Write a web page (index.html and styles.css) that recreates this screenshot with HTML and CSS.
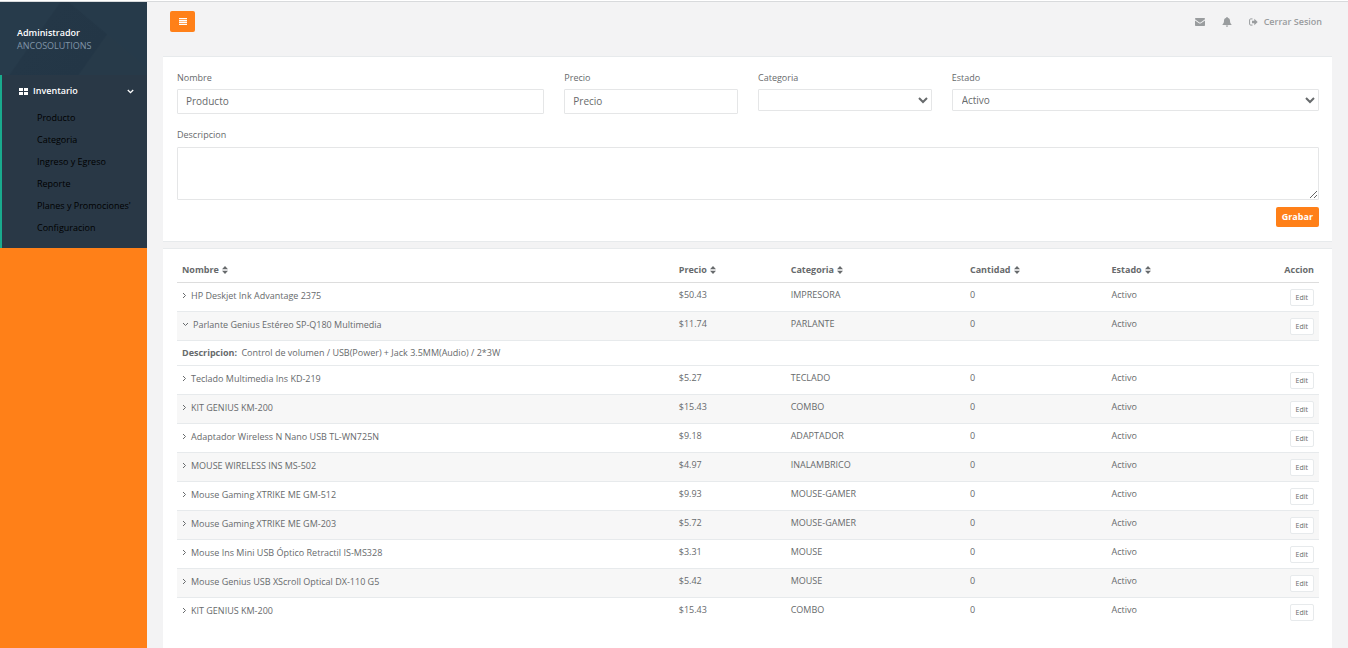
FILE: index.html
```html
<!DOCTYPE html>
<html lang="es">
<head>
  <meta charset="UTF-8" />
  <meta name="viewport" content="width=device-width, initial-scale=1" />
  <title>Inventario - Producto</title>
  <link rel="stylesheet" href="styles.css">
</head>
<body>
  <svg class="sprite" aria-hidden="true">
    <symbol id="sort" viewBox="0 0 6 8"><path d="M3 0L6 3.3H0zM0 4.7h6L3 8z"/></symbol>
    <symbol id="right" viewBox="0 0 5 7"><path d="M1 1L3.500 3.500 1 6" fill="none" stroke="currentColor"/></symbol>
    <symbol id="down" viewBox="0 0 7 5"><path d="M1 1L3.500 3.500 6 1" fill="none" stroke="currentColor"/></symbol>
    <symbol id="down-bold" viewBox="0 0 7 5"><path d="M.8 1L3.5 3.7 6.2 1" fill="none" stroke="currentColor" stroke-width="1.300"/></symbol>
  </svg>

  <div class="wrapper">
    <aside class="sidebar">
      <div class="nav-header">
        <strong>Administrador</strong>
        <span>ANCOSOLUTIONS</span>
      </div>
      <nav class="nav-menu">
        <a href="#" class="nav-title">
          <svg class="icon-grid" viewBox="0 0 9 7"><path d="M0 0h4v3H0zM5 0h4v3H5zM0 4h4v3H0zM5 4h4v3H5z"/></svg>
          <span>Inventario</span>
          <svg class="icon-down"><use href="#down-bold"/></svg>
        </a>
        <ul>
          <li><a href="#">Producto</a></li>
          <li><a href="#">Categoria</a></li>
          <li><a href="#">Ingreso y Egreso</a></li>
          <li><a href="#">Reporte</a></li>
          <li><a href="#">Planes y Promociones'</a></li>
          <li><a href="#">Configuracion</a></li>
        </ul>
      </nav>
    </aside>

    <div class="page">
      <header class="topbar">
        <button type="button" class="btn-menu" aria-label="Menu">
          <svg viewBox="0 0 8 7"><path d="M0 0h8v1.300H0zM0 1.900h8v1.300H0zM0 3.800h8v1.300H0zM0 5.700h8V7H0z"/></svg>
        </button>
        <div class="top-links">
          <a href="#" aria-label="Mensajes">
            <svg class="icon-mail" viewBox="0 0 10 8"><path d="M0 .8Q0 0 .8 0h8.4q.8 0 .8.8v.5L5.6 4.4q-.6.4-1.2 0L0 1.3zM0 2.5l4 2.8q1 .6 2 0l4-2.8v4.7q0 .8-.8.8H.8Q0 8 0 7.200z"/></svg>
          </a>
          <a href="#" aria-label="Alertas">
            <svg class="icon-bell" viewBox="0 0 10 10"><path d="M4.400 0h1.200v.8c1.700.3 2.400 1.500 2.400 3 0 2 .6 3 1.500 3.700v.5H.5v-.5C1.400 6.800 2 5.800 2 3.800c0-1.500.7-2.700 2.400-3zM3.800 8.500h2.400Q6.200 9.800 5 9.800T3.800 8.500z"/></svg>
          </a>
          <a href="#">
            <svg class="icon-out" viewBox="0 0 9 8"><path d="M3.500.9H1.700q-1.100 0-1.100 1.100v4q0 1.100 1.100 1.100h1.800" fill="none" stroke="currentColor"/><path d="M3 2.700h2.300V.8L8.700 4 5.300 7.200V5.300H3z"/></svg>
            <span>Cerrar Sesion</span>
          </a>
        </div>
      </header>

      <main>
        <form class="card form-producto">
          <div class="field col-4">
            <label for="nombre">Nombre</label>
            <input type="text" id="nombre" placeholder="Producto">
          </div>
          <div class="field col-2">
            <label for="precio">Precio</label>
            <input type="text" id="precio" placeholder="Precio">
          </div>
          <div class="field col-2">
            <label for="categoria">Categoria</label>
            <select id="categoria"><option></option></select>
          </div>
          <div class="field col-4">
            <label for="estado">Estado</label>
            <select id="estado"><option>Activo</option></select>
          </div>
          <div class="field col-12">
            <label for="descripcion">Descripcion</label>
            <textarea id="descripcion"></textarea>
          </div>
          <div class="actions col-12">
            <button type="button" class="btn-grabar">Grabar</button>
          </div>
        </form>

        <section class="card">
          <table class="tabla">
            <thead>
              <tr>
                <th class="c-nombre"><button type="button">Nombre <svg><use href="#sort"/></svg></button></th>
                <th class="c-precio"><button type="button">Precio <svg><use href="#sort"/></svg></button></th>
                <th class="c-categoria"><button type="button">Categoria <svg><use href="#sort"/></svg></button></th>
                <th class="c-cantidad"><button type="button">Cantidad <svg><use href="#sort"/></svg></button></th>
                <th class="c-estado"><button type="button">Estado <svg><use href="#sort"/></svg></button></th>
                <th class="c-accion">Accion</th>
              </tr>
            </thead>
            <tbody>
              <tr>
                <td><button type="button" class="toggle"><svg><use href="#right"/></svg>HP Deskjet Ink Advantage 2375</button></td>
                <td>$50.43</td><td>IMPRESORA</td><td>0</td><td>Activo</td>
                <td><button type="button" class="btn-edit">Edit</button></td>
              </tr>
            </tbody>
            <tbody>
              <tr>
                <td><button type="button" class="toggle open"><svg><use href="#down"/></svg>Parlante Genius Estéreo SP-Q180 Multimedia</button></td>
                <td>$11.74</td><td>PARLANTE</td><td>0</td><td>Activo</td>
                <td><button type="button" class="btn-edit">Edit</button></td>
              </tr>
              <tr class="detalle">
                <td colspan="6"><strong>Descripcion:</strong> Control de volumen / USB(Power) + Jack 3.5MM(Audio) / 2*3W</td>
              </tr>
            </tbody>
            <tbody>
              <tr>
                <td><button type="button" class="toggle"><svg><use href="#right"/></svg>Teclado Multimedia Ins KD-219</button></td>
                <td>$5.27</td><td>TECLADO</td><td>0</td><td>Activo</td>
                <td><button type="button" class="btn-edit">Edit</button></td>
              </tr>
            </tbody>
            <tbody>
              <tr>
                <td><button type="button" class="toggle"><svg><use href="#right"/></svg>KIT GENIUS KM-200</button></td>
                <td>$15.43</td><td>COMBO</td><td>0</td><td>Activo</td>
                <td><button type="button" class="btn-edit">Edit</button></td>
              </tr>
            </tbody>
            <tbody>
              <tr>
                <td><button type="button" class="toggle"><svg><use href="#right"/></svg>Adaptador Wireless N Nano USB TL-WN725N</button></td>
                <td>$9.18</td><td>ADAPTADOR</td><td>0</td><td>Activo</td>
                <td><button type="button" class="btn-edit">Edit</button></td>
              </tr>
            </tbody>
            <tbody>
              <tr>
                <td><button type="button" class="toggle"><svg><use href="#right"/></svg>MOUSE WIRELESS INS MS-502</button></td>
                <td>$4.97</td><td>INALAMBRICO</td><td>0</td><td>Activo</td>
                <td><button type="button" class="btn-edit">Edit</button></td>
              </tr>
            </tbody>
            <tbody>
              <tr>
                <td><button type="button" class="toggle"><svg><use href="#right"/></svg>Mouse Gaming XTRIKE ME GM-512</button></td>
                <td>$9.93</td><td>MOUSE-GAMER</td><td>0</td><td>Activo</td>
                <td><button type="button" class="btn-edit">Edit</button></td>
              </tr>
            </tbody>
            <tbody>
              <tr>
                <td><button type="button" class="toggle"><svg><use href="#right"/></svg>Mouse Gaming XTRIKE ME GM-203</button></td>
                <td>$5.72</td><td>MOUSE-GAMER</td><td>0</td><td>Activo</td>
                <td><button type="button" class="btn-edit">Edit</button></td>
              </tr>
            </tbody>
            <tbody>
              <tr>
                <td><button type="button" class="toggle"><svg><use href="#right"/></svg>Mouse Ins Mini USB Óptico Retractil IS-MS328</button></td>
                <td>$3.31</td><td>MOUSE</td><td>0</td><td>Activo</td>
                <td><button type="button" class="btn-edit">Edit</button></td>
              </tr>
            </tbody>
            <tbody>
              <tr>
                <td><button type="button" class="toggle"><svg><use href="#right"/></svg>Mouse Genius USB XScroll Optical DX-110 G5</button></td>
                <td>$5.42</td><td>MOUSE</td><td>0</td><td>Activo</td>
                <td><button type="button" class="btn-edit">Edit</button></td>
              </tr>
            </tbody>
            <tbody>
              <tr>
                <td><button type="button" class="toggle"><svg><use href="#right"/></svg>KIT GENIUS KM-200</button></td>
                <td>$15.43</td><td>COMBO</td><td>0</td><td>Activo</td>
                <td><button type="button" class="btn-edit">Edit</button></td>
              </tr>
            </tbody>
          </table>
        </section>
      </main>
    </div>
  </div>
</body>
</html>
```
FILE: styles.css
```css
* {
  box-sizing: border-box;
}
body {
  margin: 0;
  padding-top: 1px;
  background: #fff;
  color: #676a6c;
  font-family: "Open Sans", sans-serif;
  font-size: 9px;
  line-height: 14px;
}
button, input, select, textarea {
  font-family: inherit;
  color: inherit;
}
button {
  cursor: pointer;
}
a {
  color: inherit;
  text-decoration: none;
}
svg {
  fill: currentColor;
  flex-shrink: 0;
}
.sprite {
  display: none;
}
.wrapper {
  display: flex;
  min-height: calc(100vh - 1px);
  border-top: 1px solid #d8dadc;
}

/* sidebar */
.sidebar {
  width: 147px;
  flex-shrink: 0;
  background: #ff8018;
}
.nav-header {
  display: flex;
  flex-direction: column;
  padding: 24px 17px 23px;
  line-height: 13px;
  color: #8095a8;
  background:
    linear-gradient(40deg, transparent 66%, #263a4a 67%),
    linear-gradient(125deg, #273b4b 30%, #243747 31%, #233646 65%, #273a49 66%);
}
.nav-header strong {
  color: #fff;
  font-weight: 600;
}
.nav-menu {
  padding: 9px 0;
  border-left: 2px solid #19aa8d;
  background: #293846;
}
.nav-title {
  display: flex;
  align-items: center;
  gap: 5px;
  padding: 0 13px 0 17px;
  color: #fff;
  font-weight: 600;
}
.icon-grid {
  width: 9px;
  height: 7px;
}
.icon-down {
  width: 7px;
  height: 5px;
  margin-left: auto;
}
.nav-menu ul {
  list-style: none;
  margin: 9px 0 0;
  padding: 0;
}
.nav-menu li a {
  display: block;
  padding: 4px 0 4px 35px;
  color: #000;
}

/* contenido */
.page {
  flex: 1;
  min-width: 0;
  padding: 0 16px;
  background: #f3f3f4;
}
.topbar {
  display: flex;
  justify-content: space-between;
  align-items: center;
  height: 54px;
  padding: 0 10px 16px 7px;
}
.btn-menu {
  width: 25px;
  height: 21px;
  padding: 0;
  border: none;
  border-radius: 2px;
  background: #ff8018;
  color: #fff;
}
.btn-menu svg {
  display: block;
  width: 8px;
  height: 7px;
  margin: 0 auto;
}
.top-links {
  display: flex;
  gap: 17px;
  padding-top: 2px;
  color: #999c9e;
  font-weight: 600;
}
.top-links a {
  display: flex;
  align-items: center;
  gap: 6px;
}
.icon-mail {
  width: 10px;
  height: 8px;
}
.icon-bell {
  width: 10px;
  height: 10px;
}
.icon-out {
  width: 9px;
  height: 8px;
}
.card {
  margin-bottom: 6px;
  padding: 14px 13px 14px 14px;
  border: solid #e7eaec;
  border-width: 1px 0;
  background: #fff;
}
.card:last-child {
  margin-bottom: 0;
  padding-bottom: 40px;
  border-bottom: none;
}
.form-producto {
  display: grid;
  grid-template-columns: repeat(12, 1fr);
  column-gap: 20px;
}
.col-2 { grid-column: span 2; }
.col-4 { grid-column: span 4; }
.col-12 { grid-column: span 12; }
.field {
  min-width: 0;
}
.field label {
  display: block;
  margin-bottom: 4px;
}
.field input,
.field select,
.field textarea {
  display: block;
  width: 100%;
  border: 1px solid #e5e6e7;
  border-radius: 1px;
  background: #fff;
  font-size: 10px;
}
.field input {
  height: 25px;
  padding: 0 8px 2px;
}
.field input::placeholder {
  color: #676a6c;
}
.field select {
  height: 22px;
  padding: 0 5px;
}
.field textarea {
  height: 53px;
  padding: 4px 8px;
  resize: vertical;
}
.field.col-12 {
  margin-top: 14px;
}
.field.col-12 label {
  margin-bottom: 5px;
}
.actions {
  display: flex;
  justify-content: flex-end;
  padding-top: 7px;
}
.btn-grabar {
  height: 20px;
  padding: 0 6px 2px;
  border: none;
  border-radius: 2px;
  background: #ff8018;
  color: #fff;
  font-size: 9px;
  font-weight: 700;
}

/* tabla */
.tabla {
  width: 100%;
  table-layout: fixed;
  border-collapse: collapse;
}
.tabla th {
  height: 19px;
  padding: 0 5px;
  border-bottom: 1px solid #dddddd;
  text-align: left;
  vertical-align: top;
  font-weight: 700;
}
.tabla th button {
  display: flex;
  align-items: center;
  gap: 3px;
  padding: 0;
  border: none;
  background: none;
  font-size: 9px;
  font-weight: 700;
  line-height: 14px;
}
.tabla th svg {
  width: 6px;
  height: 8px;
}
.c-nombre { width: 43.5%; }
.c-precio { width: 9.8%; }
.c-categoria { width: 15.7%; }
.c-cantidad { width: 12.4%; }
.tabla td {
  height: 29px;
  padding: 5px;
  border-bottom: 1px solid #e7eaec;
  vertical-align: top;
}
.tabla tbody:last-child td {
  border-bottom: none;
}
.tabla tbody:nth-of-type(even) tr:first-child {
  background: #f7f7f7;
}
.tabla .detalle td {
  height: 25px;
}
.detalle strong {
  margin-right: 2px;
}
.tabla th:last-child,
.tabla td:last-child {
  text-align: right;
}
.tabla .detalle td:last-child {
  text-align: left;
}
.toggle {
  display: flex;
  align-items: center;
  gap: 4px;
  padding: 0;
  border: none;
  background: none;
  font-size: 9px;
  line-height: 15px;
  text-align: left;
}
.toggle svg {
  width: 5px;
  height: 7px;
}
.toggle.open svg {
  width: 7px;
  height: 5px;
}
.btn-edit {
  height: 17px;
  margin-top: 1px;
  padding: 0 5px;
  border: 1px solid #e7eaec;
  border-radius: 2px;
  background: #fff;
  font-size: 7px;
  vertical-align: top;
}
```
